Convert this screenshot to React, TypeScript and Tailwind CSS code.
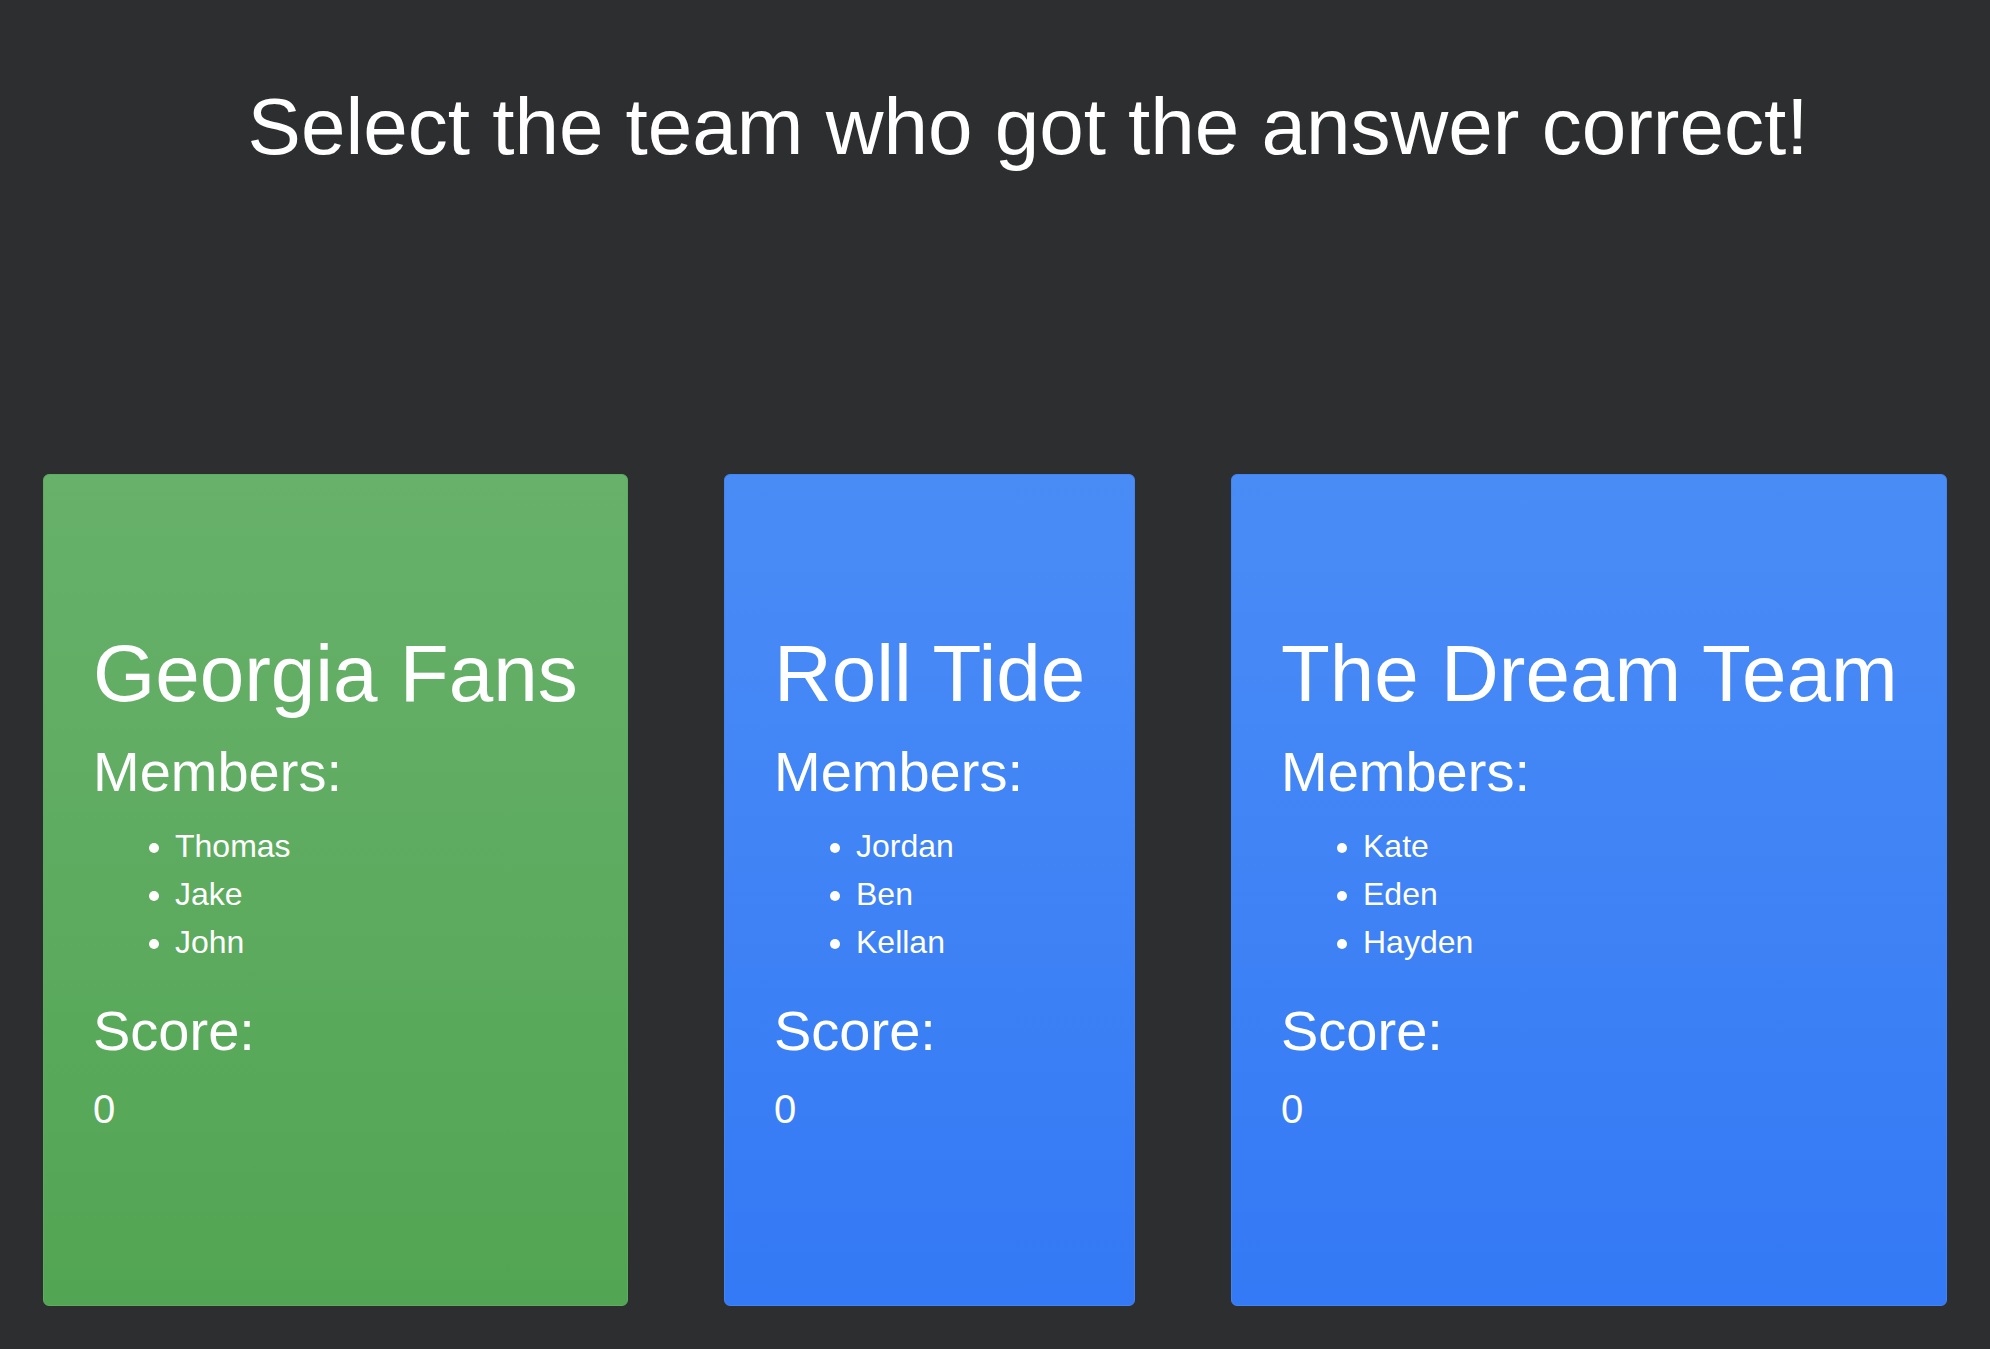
import React from "react";

type Team = { name: string; members: string[]; score: number; color: "green" | "blue"; width: string };

const teams: Team[] = [
  { name: "Georgia Fans", members: ["Thomas", "Jake", "John"], score: 0, color: "green", width: "w-[585px]" },
  { name: "Roll Tide", members: ["Jordan", "Ben", "Kellan"], score: 0, color: "blue", width: "w-[411px]" },
  { name: "The Dream Team", members: ["Kate", "Eden", "Hayden"], score: 0, color: "blue", width: "w-[716px]" },
];

function Card({ team }: { team: Team }) {
  const bg =
    team.color === "green"
      ? "bg-gradient-to-b from-[#67b16b] to-[#52a553] border-[#5eac61]"
      : "bg-gradient-to-b from-[#4a8cf6] to-[#3479f5] border-[#4384f4]";
  return (
    <div className={`${team.width} ${bg} h-[832px] shrink-0 rounded-[6px] border pl-[49px] pt-[153px] text-white`}>
      <div className="whitespace-nowrap text-[80px] leading-[92px]">{team.name}</div>
      <div className="mt-[20px] text-[56px] leading-[64px]">Members:</div>
      <ul className="mt-[18px] list-disc pl-[82px] text-[32px] leading-[48px]">
        {team.members.map((m) => (
          <li key={m}>{m}</li>
        ))}
      </ul>
      <div className="mt-[33px] text-[56px] leading-[64px]">Score:</div>
      <div className="mt-[23px] text-[40px] leading-[46px]">{team.score}</div>
    </div>
  );
}

export default function App() {
  return (
    <div
      className="min-h-[1349px] w-full bg-[#2d2e30] text-white"
      style={{ fontFamily: '"Liberation Sans", Arial, Helvetica, sans-serif' }}
    >
      <h1 className="pl-[66px] pt-[81px] text-center text-[80px] font-normal leading-[92px]">
        Select the team who got the answer correct!
      </h1>
      <div className="mt-[301px] flex gap-[96px] pl-[43px]">
        {teams.map((t) => (
          <Card key={t.name} team={t} />
        ))}
      </div>
    </div>
  );
}
